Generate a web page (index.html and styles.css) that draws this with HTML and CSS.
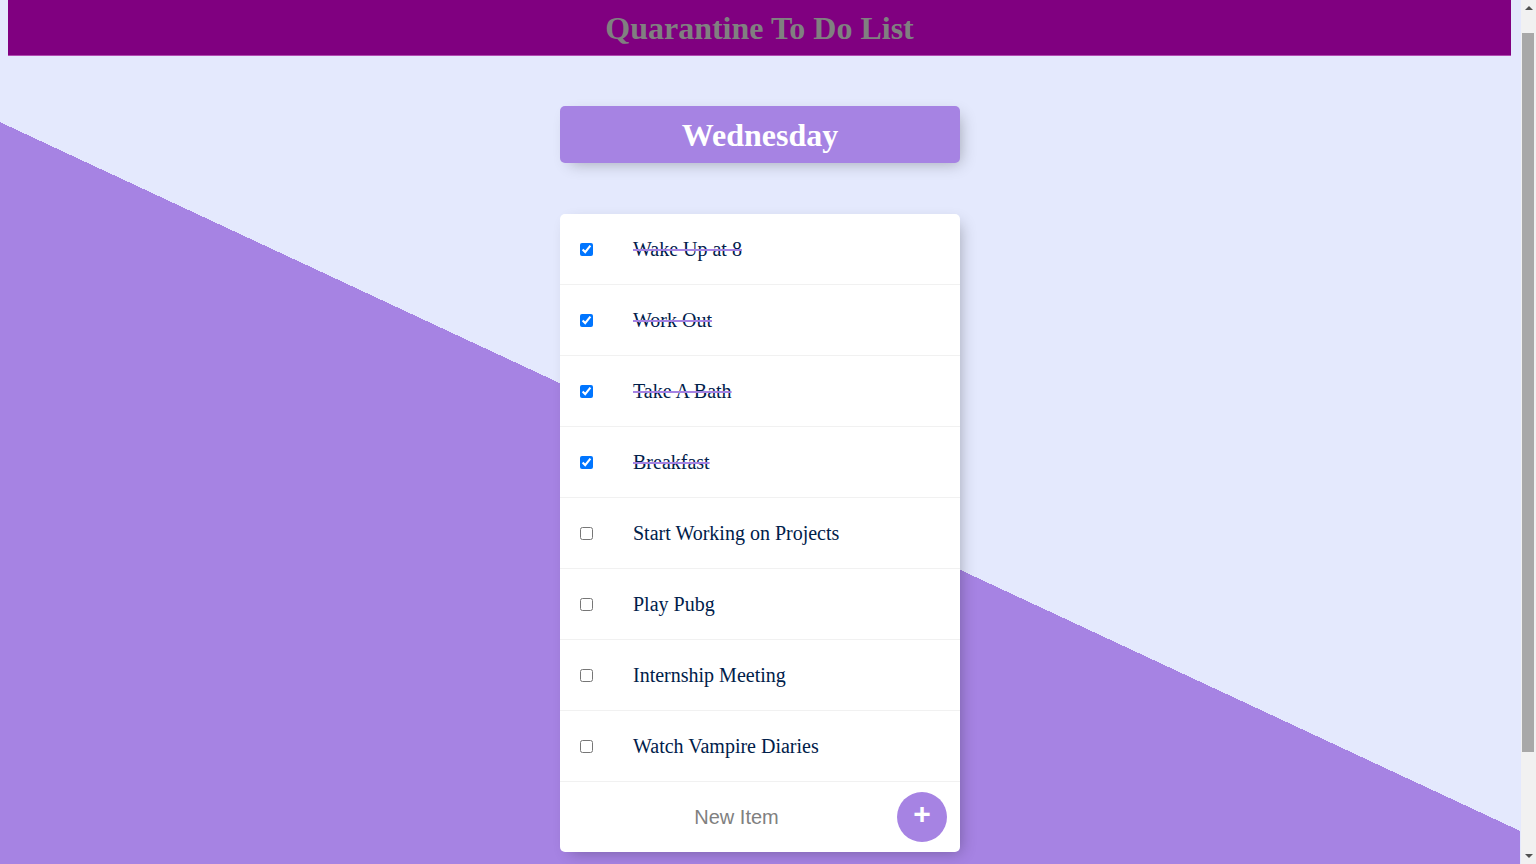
FILE: index.html
```html
<!DOCTYPE html>
<html lang="en">
<head>
<meta charset="utf-8">
<title>To Do List</title>
<link rel="stylesheet" href="styles.css">
</head>
<body>
  <h1 class="site-title">Quarantine To Do List</h1>

  <div class="box heading">
    <h1 class="day">Wednesday</h1>
  </div>

  <div class="box list">
    <div class="item">
      <input type="checkbox" class="check" checked>
      <p class="item-text">Wake Up at 8</p>
    </div>
    <div class="item">
      <input type="checkbox" class="check" checked>
      <p class="item-text">Work Out</p>
    </div>
    <div class="item">
      <input type="checkbox" class="check" checked>
      <p class="item-text">Take A Bath</p>
    </div>
    <div class="item">
      <input type="checkbox" class="check" checked>
      <p class="item-text">Breakfast</p>
    </div>
    <div class="item">
      <input type="checkbox" class="check">
      <p class="item-text">Start Working on Projects</p>
    </div>
    <div class="item">
      <input type="checkbox" class="check">
      <p class="item-text">Play Pubg</p>
    </div>
    <div class="item">
      <input type="checkbox" class="check">
      <p class="item-text">Internship Meeting</p>
    </div>
    <div class="item">
      <input type="checkbox" class="check">
      <p class="item-text">Watch Vampire Diaries</p>
    </div>
    <form class="item new-form" action="#">
      <input type="text" class="new-input" name="newItem" placeholder="New Item" autocomplete="off">
      <button type="button" class="add-btn">+</button>
    </form>
  </div>

  <div class="scrollbar" aria-hidden="true">
    <span class="sb-arrow sb-up"></span>
    <span class="sb-thumb"></span>
    <span class="sb-arrow sb-down"></span>
  </div>
</body>
</html>
```

FILE: styles.css
```css
html {
  width: 1520px;
  min-height: 953px;
  background-color: #E4E9FD;
  background-image: linear-gradient(25deg, #A683E3 50%, #E4E9FD 50%);
  background-repeat: no-repeat;
  font-family: "Liberation Serif", "Times New Roman", serif;
}

body {
  margin: 0 8px;
}

.site-title {
  margin: 0 1px 0 0;
  padding: 10px;
  height: 36px;
  line-height: 37px;
  background-color: #800080;
  color: #808080;
  text-align: center;
  font-size: 32px;
  font-weight: bold;
  box-shadow: inset 0 -1px 0 #b04ab0;
}

.box {
  max-width: 400px;
  margin: 50px auto;
  background: #ffffff;
  border-radius: 5px;
  box-shadow: 5px 5px 15px -5px rgba(0, 0, 0, 0.3);
}

.heading {
  background-color: #A683E3;
  text-align: center;
}

.list {
  margin-top: 51px;
}

.day {
  margin: 0;
  padding: 10px;
  height: 37px;
  line-height: 38px;
  color: #ffffff;
  font-size: 32px;
  font-weight: bold;
}

.item {
  min-height: 70px;
  display: flex;
  align-items: center;
  border-bottom: 1px solid #F1F1F1;
}

.item:last-child {
  border-bottom: 0;
}

.check {
  margin: 20px;
  width: 13px;
  height: 13px;
}

.item-text {
  margin: 0;
  padding: 20px;
  font-size: 20px;
  font-weight: 200;
  color: #00204a;
}

.check:checked + .item-text {
  text-decoration: line-through;
  text-decoration-color: #A683E3;
}

.new-form {
  margin: 0 0 0 20px;
  height: 70px;
}

.new-input {
  box-sizing: border-box;
  width: 313px;
  height: 60px;
  border: none;
  background: transparent;
  text-align: center;
  font-family: "Liberation Sans", Arial, sans-serif;
  font-size: 20px;
  font-weight: 200;
  padding: 0;
  color: #00204a;
}

.new-input:focus {
  outline: none;
  box-shadow: inset 0 -3px 0 0 #A683E3;
}

.new-input::placeholder {
  color: grey;
  opacity: 1;
}

.add-btn {
  width: 50px;
  height: 50px;
  margin-left: 4px;
  border-radius: 50%;
  border: 0;
  background-color: #A683E3;
  color: #ffffff;
  font-family: "Liberation Sans", Arial, sans-serif;
  font-size: 30px;
  font-weight: bold;
  padding: 0 0 6px 0;
  line-height: 1;
}

/* imitation of the browser's classic scrollbar shown in the screenshot */
.scrollbar {
  position: fixed;
  top: 0;
  right: 0;
  width: 15px;
  height: 100vh;
  background: #f1f1f1;
}

.sb-arrow {
  position: absolute;
  left: 4px;
  width: 0;
  height: 0;
  border-left: 4px solid transparent;
  border-right: 4px solid transparent;
}

.sb-up {
  top: 6px;
  border-bottom: 4px solid #505050;
}

.sb-down {
  bottom: 6px;
  border-top: 4px solid #505050;
}

.sb-thumb {
  position: absolute;
  top: 33px;
  left: 1px;
  width: 12px;
  height: 719px;
  background: #a8a8a8;
}
```
